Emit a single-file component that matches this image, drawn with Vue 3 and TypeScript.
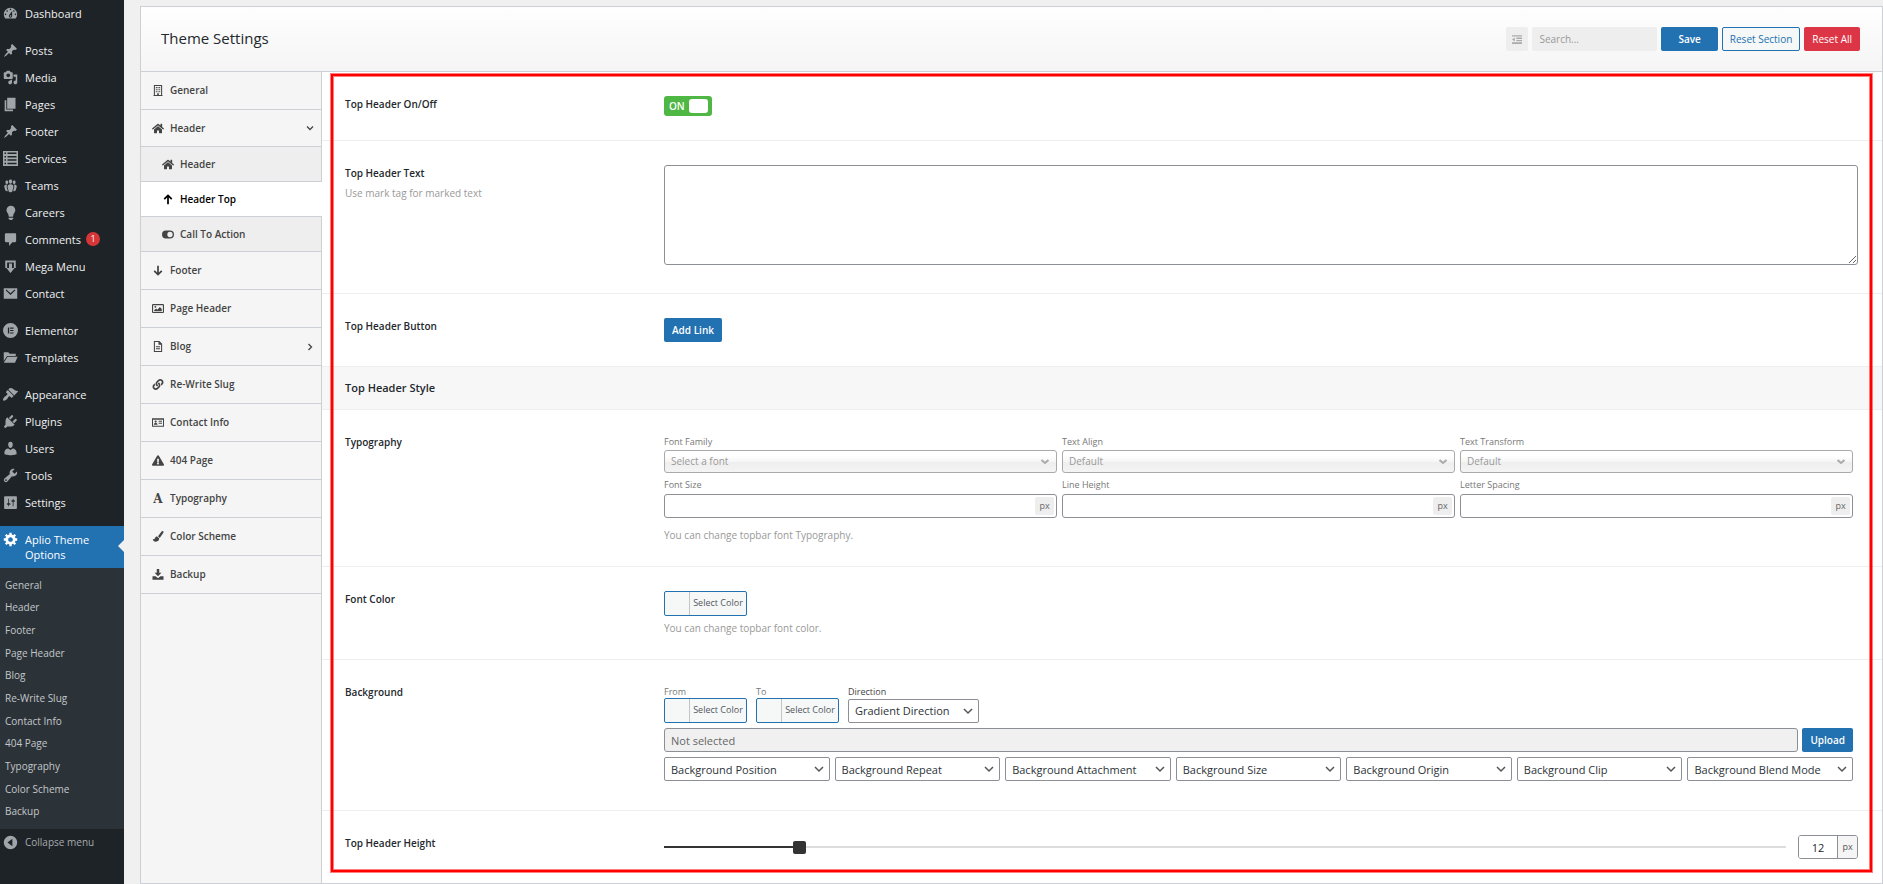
<script setup lang="ts">
import { computed, ref } from 'vue'

interface Icon { box: string; d: string; stroke?: boolean }

const icons: Record<string, Icon> = {
  dashboard: { box: '1 1 18 18', d: 'M3.76 16h12.48c1.1-1.37 1.76-3.11 1.76-5 0-4.42-3.58-8-8-8s-8 3.58-8 8c0 1.89.66 3.63 1.76 5zM10 4c.55 0 1 .45 1 1s-.45 1-1 1-1-.45-1-1 .45-1 1-1zM6 6c.55 0 1 .45 1 1s-.45 1-1 1-1-.45-1-1 .45-1 1-1zm8 0c.55 0 1 .45 1 1s-.45 1-1 1-1-.45-1-1 .45-1 1-1zm-5.37 5.55L12 7v6c0 1.1-.9 2-2 2s-2-.9-2-2c0-.57.24-1.08.63-1.45zM4 10c.55 0 1 .45 1 1s-.45 1-1 1-1-.45-1-1 .45-1 1-1zm12 0c.55 0 1 .45 1 1s-.45 1-1 1-1-.45-1-1 .45-1 1-1zm-5 3c0-.55-.45-1-1-1s-1 .45-1 1 .45 1 1 1 1-.45 1-1z' },
  pin: { box: '0 0 20 20', d: 'M10.44 3.02l1.82-1.82 6.36 6.35-1.83 1.82c-1.05-.68-2.48-.57-3.41.36l-.75.75c-.92.93-1.04 2.35-.35 3.41l-1.83 1.82-2.41-2.41-2.8 2.79c-.42.42-3.38 2.71-3.8 2.29s1.86-3.39 2.28-3.81l2.79-2.79L4.1 9.36l1.83-1.82c1.05.69 2.48.57 3.4-.36l.75-.75c.93-.92 1.05-2.35.36-3.41z' },
  media: { box: '0 0 20 20', d: 'M13 11V4c0-.55-.45-1-1-1h-1.67L9 1H5L3.67 3H2c-.55 0-1 .45-1 1v7c0 .55.45 1 1 1h10c.55 0 1-.45 1-1zM7 4.5c1.38 0 2.5 1.12 2.5 2.5S8.38 9.5 7 9.5 4.5 8.38 4.5 7 5.62 4.5 7 4.5zM14 6h5v10.5c0 1.38-1.12 2.5-2.5 2.5S14 17.88 14 16.5s1.12-2.5 2.5-2.5c.17 0 .34.02.5.05V9h-3V6zm-4 8.05V13h2v3.5c0 1.38-1.12 2.5-2.5 2.5S7 17.88 7 16.5 8.12 14 9.5 14c.17 0 .34.02.5.05z' },
  pages: { box: '1 1 18 18', d: 'M6 15V2h10v13H6zm-1 1h8v2H3V5h2v11z' },
  list: { box: '0 0 20 20', d: 'M0 0h20v20H0zM2 2v2h2V2zm4 0v2h12V2zM2 6.5v2h2v-2zm4 0v2h12v-2zM2 11v2h2v-2zm4 0v2h12v-2zM2 15.5v2h2v-2zm4 0v2h12v-2z' },
  groups: { box: '1 1 18 18', d: 'M8.03 4.46c-.29 1.28.55 3.46 1.97 3.46 1.41 0 2.25-2.18 1.96-3.46-.22-.98-1.08-1.63-1.96-1.63-.89 0-1.74.65-1.97 1.63zm-4.13.9c-.25 1.08.47 2.93 1.67 2.93s1.92-1.85 1.67-2.93c-.19-.83-.92-1.39-1.67-1.39s-1.48.56-1.67 1.39zm8.86 0c-.25 1.08.47 2.93 1.66 2.93 1.2 0 1.92-1.85 1.67-2.93-.19-.83-.92-1.39-1.67-1.39-.74 0-1.47.56-1.66 1.39zm-.59 11.43l1.25-4.3C14.2 10 12.71 8.47 10 8.47c-2.72 0-4.21 1.53-3.44 4.02l1.26 4.3C8.05 17.51 9 18 10 18c.98 0 1.94-.49 2.17-1.21zm-6.1-7.63c-.49.67-.96 1.83-.42 3.59l1.12 3.79c-.34.2-.77.31-1.2.31-.85 0-1.65-.41-1.85-1.03l-1.07-3.65c-.65-2.11.61-3.4 2.92-3.4.27 0 .54.02.79.06-.1.1-.2.22-.29.33zm8.35-.39c2.31 0 3.58 1.29 2.92 3.4l-1.07 3.65c-.2.62-1 1.03-1.85 1.03-.43 0-.86-.11-1.2-.31l1.11-3.77c.55-1.78.08-2.94-.42-3.61-.08-.11-.18-.23-.28-.33.25-.04.51-.06.79-.06z' },
  bulb: { box: '0 0 19 19', d: 'M10 1c3.11 0 5.63 2.52 5.63 5.62 0 1.84-2.03 4.58-2.03 4.58-.33.44-.6 1.25-.6 1.8v1c0 .55-.45 1-1 1H8c-.55 0-1-.45-1-1v-1c0-.55-.27-1.36-.6-1.8 0 0-2.02-2.74-2.02-4.58C4.38 3.52 6.89 1 10 1zM7 16.87V16h6v.87c0 .62-.13 1.13-.75 1.13H12c0 .62-.4 1-1.02 1h-2c-.61 0-.98-.38-.98-1h-.25c-.62 0-.75-.51-.75-1.13z' },
  comment: { box: '0 0 20 20', d: 'M4 1.5h12c.8 0 1.5.7 1.5 1.5v9c0 .8-.7 1.5-1.5 1.5h-3.5L8 18.5v-5H4c-.8 0-1.5-.7-1.5-1.5V3c0-.8.7-1.5 1.5-1.5z' },
  mega: { box: '0 0 20 20', d: 'M3 2h14v10h-2.5V4.500h-9V12H3zM8 6h4v6h3.500L10 18.500 4.500 12H8z' },
  mail: { box: '0 0 20 20', d: 'M1 3h18v14H1zM3.500 5.500l6.500 6.500 6.500-6.500-1-1L10 9.500 4.500 4.500z' },
  elementor: { box: '0 0 20 20', d: 'M10 0a10 10 0 1 0 0 20 10 10 0 0 0 0-20zM6.500 6h1.800v8H6.500zM9.500 6h4.500v1.500H9.500zM9.500 9.250h4.500v1.500H9.500zM9.500 12.500h4.500V14H9.500z' },
  folder: { box: '0 0 20 20', d: 'M1 3h6l2 2h8v3H5.500L1 14.500zM6 9h13.500L16 17H1z' },
  brush: { box: '1 1 18 18', d: 'M14.48 11.06L7.41 3.99l1.5-1.5c.5-.56 2.3-.47 3.51.32 1.21.8 1.43 1.28 2.91 2.1 1.18.64 2.45 1.26 4.45.85zm-.71.71L6.7 4.7 4.93 6.47c-.39.39-.39 1.02 0 1.41l1.06 1.06c.39.39.39 1.03 0 1.42-.6.6-1.43 1.11-2.21 1.69-.35.26-.7.53-1.01.84C1.43 14.23.4 16.08 1.4 17.07c.99 1 2.84-.03 4.18-1.36.31-.31.58-.66.85-1.02.57-.78 1.08-1.61 1.69-2.21.39-.39 1.02-.39 1.41 0l1.06 1.06c.39.39 1.02.39 1.41 0z' },
  plug: { box: '1 1 18 18', d: 'M13.11 4.36L9.87 7.6 8 5.73l3.24-3.24c.35-.34 1.05-.2 1.56.32.52.51.66 1.21.31 1.55zm-8 1.77l.91-1.12 9.01 9.01-1.19.84c-.71.71-2.63 1.16-3.82 1.16H6.14L4.9 17.26c-.59.59-1.54.59-2.12 0-.59-.58-.59-1.53 0-2.12l1.24-1.24v-3.88c0-1.13.4-3.19 1.09-3.89zm7.26 3.97l3.24-3.24c.34-.35 1.04-.21 1.55.31.52.51.66 1.21.31 1.55l-3.24 3.25z' },
  user: { box: '1 1 18 18', d: 'M10 9.25c-2.27 0-2.73-3.44-2.73-3.44C7 4.02 7.82 2 9.97 2c2.16 0 2.98 2.02 2.71 3.81 0 0-.41 3.44-2.68 3.44zm0 2.57L12.72 10c2.39 0 4.52 2.33 4.52 4.53v2.49s-3.65 1.13-7.24 1.13c-3.65 0-7.24-1.13-7.24-1.13v-2.49c0-2.25 1.94-4.48 4.47-4.48z' },
  wrench: { box: '1 1 18 18', d: 'M16.68 9.77c-1.34 1.34-3.3 1.67-4.95.99l-5.41 6.52c-.99.99-2.59.99-3.58 0s-.99-2.59 0-3.57l6.52-5.42c-.68-1.65-.35-3.61.99-4.95 1.28-1.28 3.12-1.62 4.72-1.06l-2.89 2.89 2.82 2.82 2.86-2.87c.53 1.58.18 3.39-1.08 4.65zM3.81 16.21c.4.39 1.04.39 1.43 0 .4-.4.4-1.04 0-1.43-.39-.4-1.03-.4-1.43 0-.39.39-.39 1.03 0 1.43z' },
  sliders: { box: '0 0 20 20', d: 'M18.5 17.5v-15c0-.55-.45-1-1-1h-15c-.55 0-1 .45-1 1v15c0 .55.45 1 1 1h15c.55 0 1-.45 1-1zM8 11h1c.55 0 1 .45 1 1s-.45 1-1 1H8v1.5c0 .28-.22.5-.5.5s-.5-.22-.5-.5V13H6c-.55 0-1-.45-1-1s.45-1 1-1h1V5.5c0-.28.22-.5.5-.5s.5.22.5.5V11zm5-2h-1c-.55 0-1-.45-1-1s.45-1 1-1h1V5.5c0-.28.22-.5.5-.5s.5.22.5.5V7h1c.55 0 1 .45 1 1s-.45 1-1 1h-1v5.5c0 .28-.22.5-.5.5s-.5-.22-.5-.5V9z' },
  gear: { box: '0 1 19 19', d: 'M18 12h-2.18c-.17.7-.44 1.35-.81 1.93l1.54 1.54-2.1 2.1-1.54-1.54c-.58.36-1.23.63-1.91.79V19H8v-2.18c-.68-.16-1.33-.43-1.91-.79l-1.54 1.54-2.12-2.12 1.54-1.54c-.36-.58-.63-1.23-.79-1.91H1V9.03h2.17c.16-.7.44-1.35.8-1.94L2.43 5.55l2.1-2.1 1.54 1.54c.58-.37 1.24-.64 1.93-.81V2h3v2.18c.68.16 1.33.43 1.91.79l1.54-1.54 2.12 2.12-1.54 1.54c.36.59.64 1.24.8 1.94H18V12zm-8.5 1.5c1.66 0 3-1.34 3-3s-1.34-3-3-3-3 1.34-3 3 1.34 3 3 3z' },
  collapse: { box: '0 0 20 20', d: 'M10 1a9 9 0 1 0 0 18 9 9 0 0 0 0-18zM12.500 5v10L6 10z' },
  building: { box: '1 0 14 16', d: 'M2 0h12v14.500h.5V16h-13v-1.500H2zM3.500 1.500v13h3.300V12h2.400v2.500h3.300v-13zM4.800 3h1.600v1.600H4.800zM7.200 3h1.600v1.600H7.200zM9.600 3h1.600v1.600H9.600zM4.800 6h1.600v1.600H4.800zM7.200 6h1.600v1.600H7.200zM9.600 6h1.600v1.600H9.600zM4.800 9h1.600v1.600H4.800zM7.200 9h1.600v1.600H7.200zM9.600 9h1.600v1.600H9.600z' },
  home: { box: '0 30 576 454', d: 'M280.37 148.26L96 300.11V464a16 16 0 0 0 16 16l112.06-.29a16 16 0 0 0 15.92-16V368a16 16 0 0 1 16-16h64a16 16 0 0 1 16 16v95.64a16 16 0 0 0 16 16.05L464 480a16 16 0 0 0 16-16V300L295.67 148.26a12.19 12.19 0 0 0-15.3 0zM571.6 251.47L488 182.56V44.05a12 12 0 0 0-12-12h-56a12 12 0 0 0-12 12v72.61L318.47 43a48 48 0 0 0-61 0L4.34 251.47a12 12 0 0 0-1.6 16.9l25.5 31A12 12 0 0 0 45.15 301l235.22-193.74a12.19 12.19 0 0 1 15.3 0L530.9 301a12 12 0 0 0 16.9-1.6l25.5-31a12 12 0 0 0-1.7-16.93z' },
  up: { box: '1 0 14 16', d: 'M8 15V2.500M2.500 7.500L8 2l5.500 5.500', stroke: true },
  down: { box: '1 0 14 16', d: 'M8 1v12.500M2.500 8.500L8 14l5.500-5.500', stroke: true },
  toggle: { box: '0 1 18 14', d: 'M6 2h6a6 6 0 0 1 0 12H6A6 6 0 0 1 6 2zM12 4a4 4 0 1 0 0 8 4 4 0 0 0 0-8z' },
  image: { box: '0 1 16 14', d: 'M1.500 2h13A1.500 1.500 0 0 1 16 3.500v9a1.500 1.500 0 0 1-1.500 1.500h-13A1.500 1.500 0 0 1 0 12.500v-9A1.500 1.500 0 0 1 1.500 2zm0 1.500v9h13v-9zM4.500 4.500a1.300 1.300 0 1 1 0 2.600 1.300 1.300 0 0 1 0-2.600zM3 11.500v-1.500L5.500 8 7 9.500 10.500 6 13 8.500v3z' },
  file: { box: '1 0 14 16', d: 'M2 0h8l4 4v12H2zM3.500 1.500v13h9V5.500H8.700V1.500zM5 7.500h6V9H5zM5 10.500h6V12H5z' },
  link: { box: '0 0 512 512', d: 'M326.612 185.391c59.747 59.809 58.927 155.698.36 214.59-.11.12-.24.25-.36.37l-67.2 67.2c-59.27 59.27-155.699 59.262-214.96 0-59.27-59.26-59.27-155.7 0-214.96l37.106-37.106c9.84-9.84 26.786-3.3 27.294 10.606.648 17.722 3.826 35.527 9.69 52.721 1.986 5.822.567 12.262-3.783 16.612l-13.087 13.087c-28.026 28.026-28.905 73.66-1.155 101.96 28.024 28.579 74.086 28.749 102.325.51l67.2-67.19c28.191-28.191 28.073-73.757 0-101.83-3.701-3.694-7.429-6.564-10.341-8.569a16.037 16.037 0 0 1-6.947-12.606c-.396-10.567 3.348-21.456 11.698-29.806l21.054-21.055c5.521-5.521 14.182-6.199 20.584-1.731a152.482 152.482 0 0 1 20.522 17.197zM467.547 44.449c-59.261-59.262-155.69-59.27-214.96 0l-67.2 67.2c-.12.12-.25.25-.36.37-58.566 58.892-59.387 154.781.36 214.59a152.454 152.454 0 0 0 20.521 17.196c6.402 4.468 15.064 3.789 20.584-1.731l21.054-21.055c8.35-8.35 12.094-19.239 11.698-29.806a16.037 16.037 0 0 0-6.947-12.606c-2.912-2.005-6.64-4.875-10.341-8.569-28.073-28.073-28.191-73.639 0-101.83l67.2-67.19c28.239-28.239 74.3-28.069 102.325.51 27.75 28.3 26.872 73.934-1.155 101.96l-13.087 13.087c-4.35 4.35-5.769 10.79-3.783 16.612 5.864 17.194 9.042 34.999 9.69 52.721.509 13.906 17.454 20.446 27.294 10.606l37.106-37.106c59.271-59.259 59.271-155.699.001-214.959z' },
  card: { box: '0 1 18 14', d: 'M0 1.500h18v13H0zM1.500 4v9h15V4zM5.500 5a1.600 1.600 0 1 1 0 3.200A1.600 1.600 0 0 1 5.500 5zM2.700 11.500c0-1.800 1-2.700 2.800-2.700s2.800.9 2.800 2.700zM10 5.500h5V7h-5zM10 8.500h5V10h-5z' },
  warn: { box: '0 0 576 512', d: 'M569.517 440.013C587.975 472.007 564.806 512 527.94 512H48.054c-36.937 0-59.999-40.055-41.577-71.987L246.423 23.985c18.467-32.009 64.72-31.951 83.154 0l239.94 416.028zM288 354c-25.405 0-46 20.595-46 46s20.595 46 46 46 46-20.595 46-46-20.595-46-46-46zm-43.673-165.346l7.418 136c.347 6.364 5.609 11.346 11.982 11.346h48.546c6.373 0 11.635-4.982 11.982-11.346l7.418-136c.375-6.874-5.098-12.654-11.982-12.654h-63.383c-6.884 0-12.356 5.78-11.981 12.654z' },
  paint: { box: '0 0 16 16', d: 'M15.500.5c.7.6.6 1.500.1 2.300L10.500 10 8 7.500 13.200.9c.7-.8 1.600-1 2.300-.4zM7.200 8.200l2.500 2.600c.1 2.700-1.700 4.700-4.700 4.700C2 15.500.5 13.500.5 11.500c2 1 2.500.5 3-1 .6-1.700 2-2.600 3.700-2.300z' },
  download: { box: '0 0 16 16', d: 'M6.200 0h3.600v5.500H13L8 10.700 3 5.500h3.200zM0 10.500h4.500L8 13.500l3.500-3H16V15.500H0z' },
  outdent: { box: '0 0 16 16', d: 'M0 1h16v2.200H0zM7 4.800h9V7H7zM7 8.600h9v2.200H7zM0 12.400h16v2.600H0zM0 7.900L4.500 4.800v6.200z' },
}

interface Item { label: string; icon: string; badge?: number }

const menuGroups: Item[][] = [
  [{ label: 'Dashboard', icon: 'dashboard' }],
  [
    { label: 'Posts', icon: 'pin' },
    { label: 'Media', icon: 'media' },
    { label: 'Pages', icon: 'pages' },
    { label: 'Footer', icon: 'pin' },
    { label: 'Services', icon: 'list' },
    { label: 'Teams', icon: 'groups' },
    { label: 'Careers', icon: 'bulb' },
    { label: 'Comments', icon: 'comment', badge: 1 },
    { label: 'Mega Menu', icon: 'mega' },
    { label: 'Contact', icon: 'mail' },
  ],
  [
    { label: 'Elementor', icon: 'elementor' },
    { label: 'Templates', icon: 'folder' },
  ],
  [
    { label: 'Appearance', icon: 'brush' },
    { label: 'Plugins', icon: 'plug' },
    { label: 'Users', icon: 'user' },
    { label: 'Tools', icon: 'wrench' },
    { label: 'Settings', icon: 'sliders' },
  ],
]

interface Section { label: string; icon: string; children?: Item[]; open?: boolean }

const sections: Section[] = [
  { label: 'General', icon: 'building' },
  {
    label: 'Header', icon: 'home', open: true,
    children: [
      { label: 'Header', icon: 'home' },
      { label: 'Header Top', icon: 'up' },
      { label: 'Call To Action', icon: 'toggle' },
    ],
  },
  { label: 'Footer', icon: 'down' },
  { label: 'Page Header', icon: 'image' },
  { label: 'Blog', icon: 'file', children: [] },
  { label: 'Re-Write Slug', icon: 'link' },
  { label: 'Contact Info', icon: 'card' },
  { label: '404 Page', icon: 'warn' },
  { label: 'Typography', icon: 'font' },
  { label: 'Color Scheme', icon: 'paint' },
  { label: 'Backup', icon: 'download' },
]

const fontSelects = [
  { label: 'Font Family', value: 'Select a font' },
  { label: 'Text Align', value: 'Default' },
  { label: 'Text Transform', value: 'Default' },
]
const fontSizes = ['Font Size', 'Line Height', 'Letter Spacing']
const backgroundSelects = ['Position', 'Repeat', 'Attachment', 'Size', 'Origin', 'Clip', 'Blend Mode']

const activeTab = ref('Header Top')
const topHeaderOn = ref(true)
const headerText = ref('')
const headerHeight = ref(12)
const fill = computed(() => `${headerHeight.value}%`)
</script>

<template>
  <div class="page">
    <nav class="sidebar" aria-label="Admin menu">
      <ul v-for="(group, g) in menuGroups" :key="g" class="group">
        <li v-for="item in group" :key="item.label">
          <a href="#" class="menu-link">
            <svg class="menu-icon" :viewBox="icons[item.icon].box" aria-hidden="true"><path :d="icons[item.icon].d" fill-rule="evenodd" /></svg>
            <span>{{ item.label }}</span>
            <span v-if="item.badge" class="badge">{{ item.badge }}</span>
          </a>
        </li>
      </ul>
      <a href="#" class="menu-link current" aria-current="page">
        <svg class="menu-icon" :viewBox="icons.gear.box" aria-hidden="true"><path :d="icons.gear.d" fill-rule="evenodd" /></svg>
        <span>Aplio Theme Options</span>
      </a>
      <ul class="submenu">
        <li v-for="s in sections" :key="s.label"><a href="#">{{ s.label }}</a></li>
      </ul>
      <button type="button" class="menu-link collapse">
        <svg class="menu-icon" :viewBox="icons.collapse.box" aria-hidden="true"><path :d="icons.collapse.d" fill-rule="evenodd" /></svg>
        <span>Collapse menu</span>
      </button>
    </nav>

    <main class="panel">
      <header class="panel-head">
        <h1>Theme Settings</h1>
        <div class="tools">
          <button type="button" class="expand" aria-label="Show all settings">
            <svg :viewBox="icons.outdent.box" aria-hidden="true"><path :d="icons.outdent.d" /></svg>
          </button>
          <input type="search" class="search" placeholder="Search..." aria-label="Search">
          <button type="button" class="btn save">Save</button>
          <button type="button" class="btn outline">Reset Section</button>
          <button type="button" class="btn danger">Reset All</button>
        </div>
      </header>

      <div class="panel-body">
        <nav class="tabs" aria-label="Settings sections">
          <ul>
            <li v-for="s in sections" :key="s.label">
              <a href="#" class="tab" :class="{ open: s.open }">
                <span class="tab-icon">
                  <span v-if="s.icon === 'font'" class="letter" aria-hidden="true">A</span>
                  <svg v-else :viewBox="icons[s.icon].box" :class="{ stroke: icons[s.icon].stroke }" aria-hidden="true"><path :d="icons[s.icon].d" fill-rule="evenodd" /></svg>
                </span>
                <span>{{ s.label }}</span>
                <svg v-if="s.children" class="arrow" viewBox="0 0 8 8" aria-hidden="true"><path :d="s.open ? 'M1 2.500L4 5.500 7 2.500' : 'M2.500 1L5.500 4 2.500 7'" /></svg>
              </a>
              <ul v-if="s.open">
                <li v-for="c in s.children" :key="c.label">
                  <a href="#" class="tab sub" :class="{ active: c.label === activeTab }" @click.prevent="activeTab = c.label">
                    <span class="tab-icon">
                      <svg :viewBox="icons[c.icon].box" :class="{ stroke: icons[c.icon].stroke }" aria-hidden="true"><path :d="icons[c.icon].d" fill-rule="evenodd" /></svg>
                    </span>
                    <span>{{ c.label }}</span>
                  </a>
                </li>
              </ul>
            </li>
          </ul>
        </nav>

        <form class="content" @submit.prevent>
          <div class="field">
            <h2>Top Header On/Off</h2>
            <div>
              <label class="switch" :class="{ off: !topHeaderOn }">
                <input v-model="topHeaderOn" type="checkbox" aria-label="Top Header On/Off">
                <span>{{ topHeaderOn ? 'ON' : 'OFF' }}</span>
                <span class="knob"></span>
              </label>
            </div>
          </div>

          <div class="field">
            <div>
              <h2><label for="header-text">Top Header Text</label></h2>
              <p class="hint">Use mark tag for marked text</p>
            </div>
            <div><textarea id="header-text" v-model="headerText"></textarea></div>
          </div>

          <div class="field">
            <h2>Top Header Button</h2>
            <div><button type="button" class="btn save add">Add Link</button></div>
          </div>

          <h2 class="subheading">Top Header Style</h2>

          <div class="field">
            <h2>Typography</h2>
            <div>
              <div class="thirds">
                <label v-for="f in fontSelects" :key="f.label" class="stack">
                  <span>{{ f.label }}</span>
                  <span class="select muted">
                    <select><option>{{ f.value }}</option></select>
                    <svg viewBox="0 0 10 8" aria-hidden="true"><path d="M1.500 2L5 5 8.500 2" /></svg>
                  </span>
                </label>
                <label v-for="f in fontSizes" :key="f" class="stack second">
                  <span>{{ f }}</span>
                  <span class="unit-input"><input type="text"><span>px</span></span>
                </label>
              </div>
              <p class="hint spaced">You can change topbar font Typography.</p>
            </div>
          </div>

          <div class="field">
            <h2>Font Color</h2>
            <div>
              <button type="button" class="color"><i></i><span>Select Color</span></button>
              <p class="hint">You can change topbar font color.</p>
            </div>
          </div>

          <div class="field">
            <h2>Background</h2>
            <div class="background">
              <div class="gradient">
                <div class="stack"><span>From</span><button type="button" class="color"><i></i><span>Select Color</span></button></div>
                <div class="stack"><span>To</span><button type="button" class="color"><i></i><span>Select Color</span></button></div>
                <label class="stack direction">
                  <span>Direction</span>
                  <span class="select">
                    <select><option>Gradient Direction</option></select>
                    <svg viewBox="0 0 10 8" aria-hidden="true"><path d="M1 2L5 6 9 2" /></svg>
                  </span>
                </label>
              </div>
              <div class="upload">
                <input type="text" placeholder="Not selected" aria-label="Background image" readonly>
                <button type="button" class="btn save">Upload</button>
              </div>
              <div class="sevenths">
                <span v-for="b in backgroundSelects" :key="b" class="select">
                  <select :aria-label="`Background ${b}`"><option>Background {{ b }}</option></select>
                  <svg viewBox="0 0 10 8" aria-hidden="true"><path d="M1 2L5 6 9 2" /></svg>
                </span>
              </div>
            </div>
          </div>

          <div class="field last">
            <h2>Top Header Height</h2>
            <div class="range">
              <div class="track" :style="{ '--fill': fill }">
                <input v-model.number="headerHeight" type="range" min="0" max="100" aria-label="Top Header Height">
              </div>
              <label class="amount"><input v-model.number="headerHeight" type="text" aria-label="Height in pixels"><span>px</span></label>
            </div>
          </div>

          <div class="highlight" aria-hidden="true"></div>
        </form>
      </div>
    </main>
  </div>
</template>

<style>
body { margin: 0; background: #f0f0f1; }
</style>

<style scoped>
* { box-sizing: border-box; }
.page {
  display: flex;
  min-height: 100vh;
  background: #f0f0f1;
  color: #23282d;
  font: 10px/15px "Open Sans", "Noto Sans", sans-serif;
}
ul { margin: 0; padding: 0; list-style: none; }
h1, h2, p { margin: 0; }
a { color: inherit; text-decoration: none; }
button, input, select, textarea { margin: 0; font: inherit; color: inherit; }
svg { display: block; fill: currentColor; }

/* Admin menu */
.sidebar { display: flex; flex-direction: column; flex: 0 0 124px; background: #1d2327; color: #f0f0f1; }
.group { margin-bottom: 10px; }
.menu-link { display: flex; align-items: center; gap: 7px; height: 27px; padding: 0 12px 1px 3px; font-size: 11px; }
.menu-icon { flex: none; width: 15px; height: 15px; color: #a0a5aa; }
.badge {
  display: grid; place-items: center; width: 14px; height: 14px; margin-left: -2px;
  border-radius: 50%; background: #d63638; color: #fff; font-size: 9px; line-height: 14px;
}
.current { position: relative; align-items: flex-start; height: 42px; padding: 6px 24px 0 3px; background: #2271b1; color: #fff; }
.current .menu-icon { color: #fff; }
.current::after {
  content: ""; position: absolute; top: 14px; right: 0;
  border: 6px solid transparent; border-left-width: 0; border-right-color: #f0f0f1;
}
.submenu {
  display: grid; flex: 1; grid-auto-rows: minmax(22px, 1fr); align-items: center;
  padding: 6px 5px; background: #2c3338; color: #c3c7cb;
}
.submenu a { display: block; }
.collapse { margin-bottom: 28px; border: 0; background: none; color: #a7aaad; font-size: 10px; text-align: left; }

/* Panel frame */
.panel { display: flex; flex: 1; flex-direction: column; min-width: 0; margin: 6px 0 0 16px; border: 1px solid #ccd0d4; background: #fff; }
.panel-head {
  display: flex; align-items: center; justify-content: space-between; height: 65px; padding: 0 22px 0 20px;
  border-bottom: 1px solid #ccd0d4; background: linear-gradient(#fefefe, #f5f5f5);
}
h1 { padding-bottom: 3px; font-size: 15px; font-weight: 400; line-height: 24px; }
.tools { display: flex; gap: 4px; }
.expand { display: grid; place-items: center; width: 22px; height: 24px; padding: 0; border: 0; border-radius: 2px; background: #eee; color: #aaa; }
.expand svg { width: 10px; height: 11px; }
.search { width: 125px; height: 24px; padding: 0 7px; border: 0; border-radius: 2px; background: #eee; }
.search::placeholder { color: #999; opacity: 1; }
.btn { height: 24px; padding: 0 7px; border: 1px solid transparent; border-radius: 2px; font-weight: 500; line-height: 22px; white-space: nowrap; }
.save { background: #2271b1; color: #fff; font-weight: 600; }
.tools .save { padding: 0 16px; }
.outline { border-color: #2271b1; background: #f6f7f7; color: #2271b1; }
.danger { background: #dc3545; color: #fff; }
.panel-body { display: flex; flex: 1; }

/* Section tabs */
.tabs { flex: 0 0 181px; background: linear-gradient(to left, #ccd0d4 1px, #f5f5f5 1px); }
.tab {
  display: flex; align-items: center; gap: 6px; height: 38px; padding: 0 8px 0 11px;
  border-bottom: 1px solid #ccd0d4; color: #444; font-weight: 600;
}
.tab.open { height: 37px; }
.tab-icon { display: grid; place-items: center; width: 12px; height: 12px; }
.tab-icon svg { width: 12px; height: 11px; }
.letter { font: bold 12px/12px "DejaVu Serif", serif; }
.stroke { fill: none; stroke: currentColor; stroke-width: 2.500; }
.arrow { width: 8px; height: 8px; margin-left: auto; fill: none; stroke: #444; stroke-width: 1.300; }
.tab.sub { height: 35px; margin-right: 1px; padding-left: 21px; background: #eee; }
.tab.sub.active { margin-right: 0; background: #fff; color: #000; }

/* Settings form */
.content { position: relative; flex: 1; min-width: 0; }
.field { display: grid; grid-template-columns: 318px minmax(0, 1fr); padding: 24px 24px 24px 23px; border-bottom: 1px solid #eee; }
.field.last { border-bottom: 0; }
.field > div:last-child { padding-left: 1px; }
h2 { font-size: 10px; font-weight: 600; line-height: 16px; }
.hint { margin-top: 5px; color: #999; line-height: 14px; }
.hint.spaced { margin-top: 10px; }
.subheading { padding: 13px 23px; border-bottom: 1px solid #eee; background: #f7f7f7; font-size: 11px; }
.switch {
  display: flex; align-items: center; justify-content: space-between; width: 48px; height: 20px; padding: 0 4px 0 5px;
  border-radius: 3px; background: #4fb845; color: #fff; font-weight: 600;
}
.switch.off { background: #aaa; }
.switch input { position: absolute; opacity: 0; }
.knob { width: 19px; height: 14px; border-radius: 3px; background: #fff; }
textarea { display: block; width: 100%; height: 100px; margin-bottom: 4px; border: 1px solid #8c8f94; border-radius: 3px; }
.add { display: block; }

.thirds { display: grid; grid-template-columns: repeat(3, minmax(0, 1fr)); gap: 4px 5px; margin-right: 5px; }
.stack { display: grid; grid-template-rows: 16px auto; color: #777; font-size: 9px; line-height: 15px; }
.stack.second { grid-template-rows: 17px auto; }
.select { display: grid; grid-template-columns: 1fr; align-items: center; min-width: 0; color: #2c3338; font-size: 11px; }
.select > * { grid-area: 1 / 1; }
select { width: 100%; height: 24px; padding: 0 20px 0 6px; border: 1px solid #8c8f94; border-radius: 2px; background: #fff; appearance: none; }
.select svg { justify-self: end; width: 10px; height: 8px; margin-right: 6px; fill: none; stroke: #555; stroke-width: 1.500; pointer-events: none; }
.muted { color: #999; font-size: 10px; }
.muted select { height: 23px; border-color: #aaa; border-radius: 3px; background: linear-gradient(#fff 20%, #f6f6f6 50%, #eee 52%, #f4f4f4); }
.muted svg { margin-right: 7px; stroke: #aaa; stroke-width: 2; }
.unit-input { display: flex; align-items: center; height: 24px; padding-right: 2px; border: 1px solid #8c8f94; border-radius: 3px; background: #fff; }
.unit-input input { flex: 1; min-width: 0; height: 22px; padding: 0 6px; border: 0; background: none; }
.unit-input span { width: 19px; border-radius: 2px; background: #eee; color: #666; line-height: 18px; text-align: center; }

.color { display: flex; height: 25px; padding: 0; border: 1px solid #2271b1; border-radius: 2px; background: #f6f7f7; color: #50575e; font-size: 9px; line-height: 22px; }
.color i { width: 25px; border-right: 1px solid #c3c4c7; }
.color span { width: 56px; text-align: center; white-space: nowrap; }
.background { display: grid; gap: 5px; margin-right: 5px; padding-bottom: 5px; }
.gradient { display: flex; gap: 9px; }
.gradient .stack { grid-template-rows: 14px auto; }
.gradient .direction { width: 131px; color: #444; }
.upload { display: flex; gap: 4px; }
.upload input { flex: 1; min-width: 0; height: 24px; padding: 0 6px; border: 1px solid #8c8f94; border-radius: 3px; background: #f0f0f0; font-size: 11px; }
.upload input::placeholder { color: #666; opacity: 1; }
.sevenths { display: grid; grid-template-columns: repeat(7, minmax(0, 1fr)); gap: 5px; }

.range { display: flex; align-items: center; gap: 12px; }
.track {
  flex: 1; min-width: 0;
  background: linear-gradient(to right, #333 var(--fill), #ddd var(--fill)) center / 100% 2px no-repeat;
}
.track input { display: block; width: calc(100% + 12px); height: 13px; margin: 0 -6px; background: none; appearance: none; }
.track input::-webkit-slider-thumb { width: 13px; height: 13px; border: 0; border-radius: 2px; background: #333; appearance: none; }
.track input::-moz-range-thumb { width: 13px; height: 13px; border: 0; border-radius: 2px; background: #333; }
.amount { display: flex; width: 60px; height: 24px; overflow: hidden; border: 1px solid #8c8f94; border-radius: 3px; }
.amount input { flex: 1; min-width: 0; padding: 0; border: 0; background: #fff; font-size: 11px; text-align: center; }
.amount span { width: 20px; border-left: 1px solid #8c8f94; background: #f5f5f5; color: #555; font-size: 9px; line-height: 22px; text-align: center; }

/* Annotation frame drawn over the settings */
.highlight {
  position: absolute; inset: 2px 10px 11px 9px; border: 2px solid #f00;
  box-shadow: 0 0 0 1px rgba(255, 0, 0, .5), inset 0 0 0 1px rgba(255, 0, 0, .5); pointer-events: none;
}
</style>
